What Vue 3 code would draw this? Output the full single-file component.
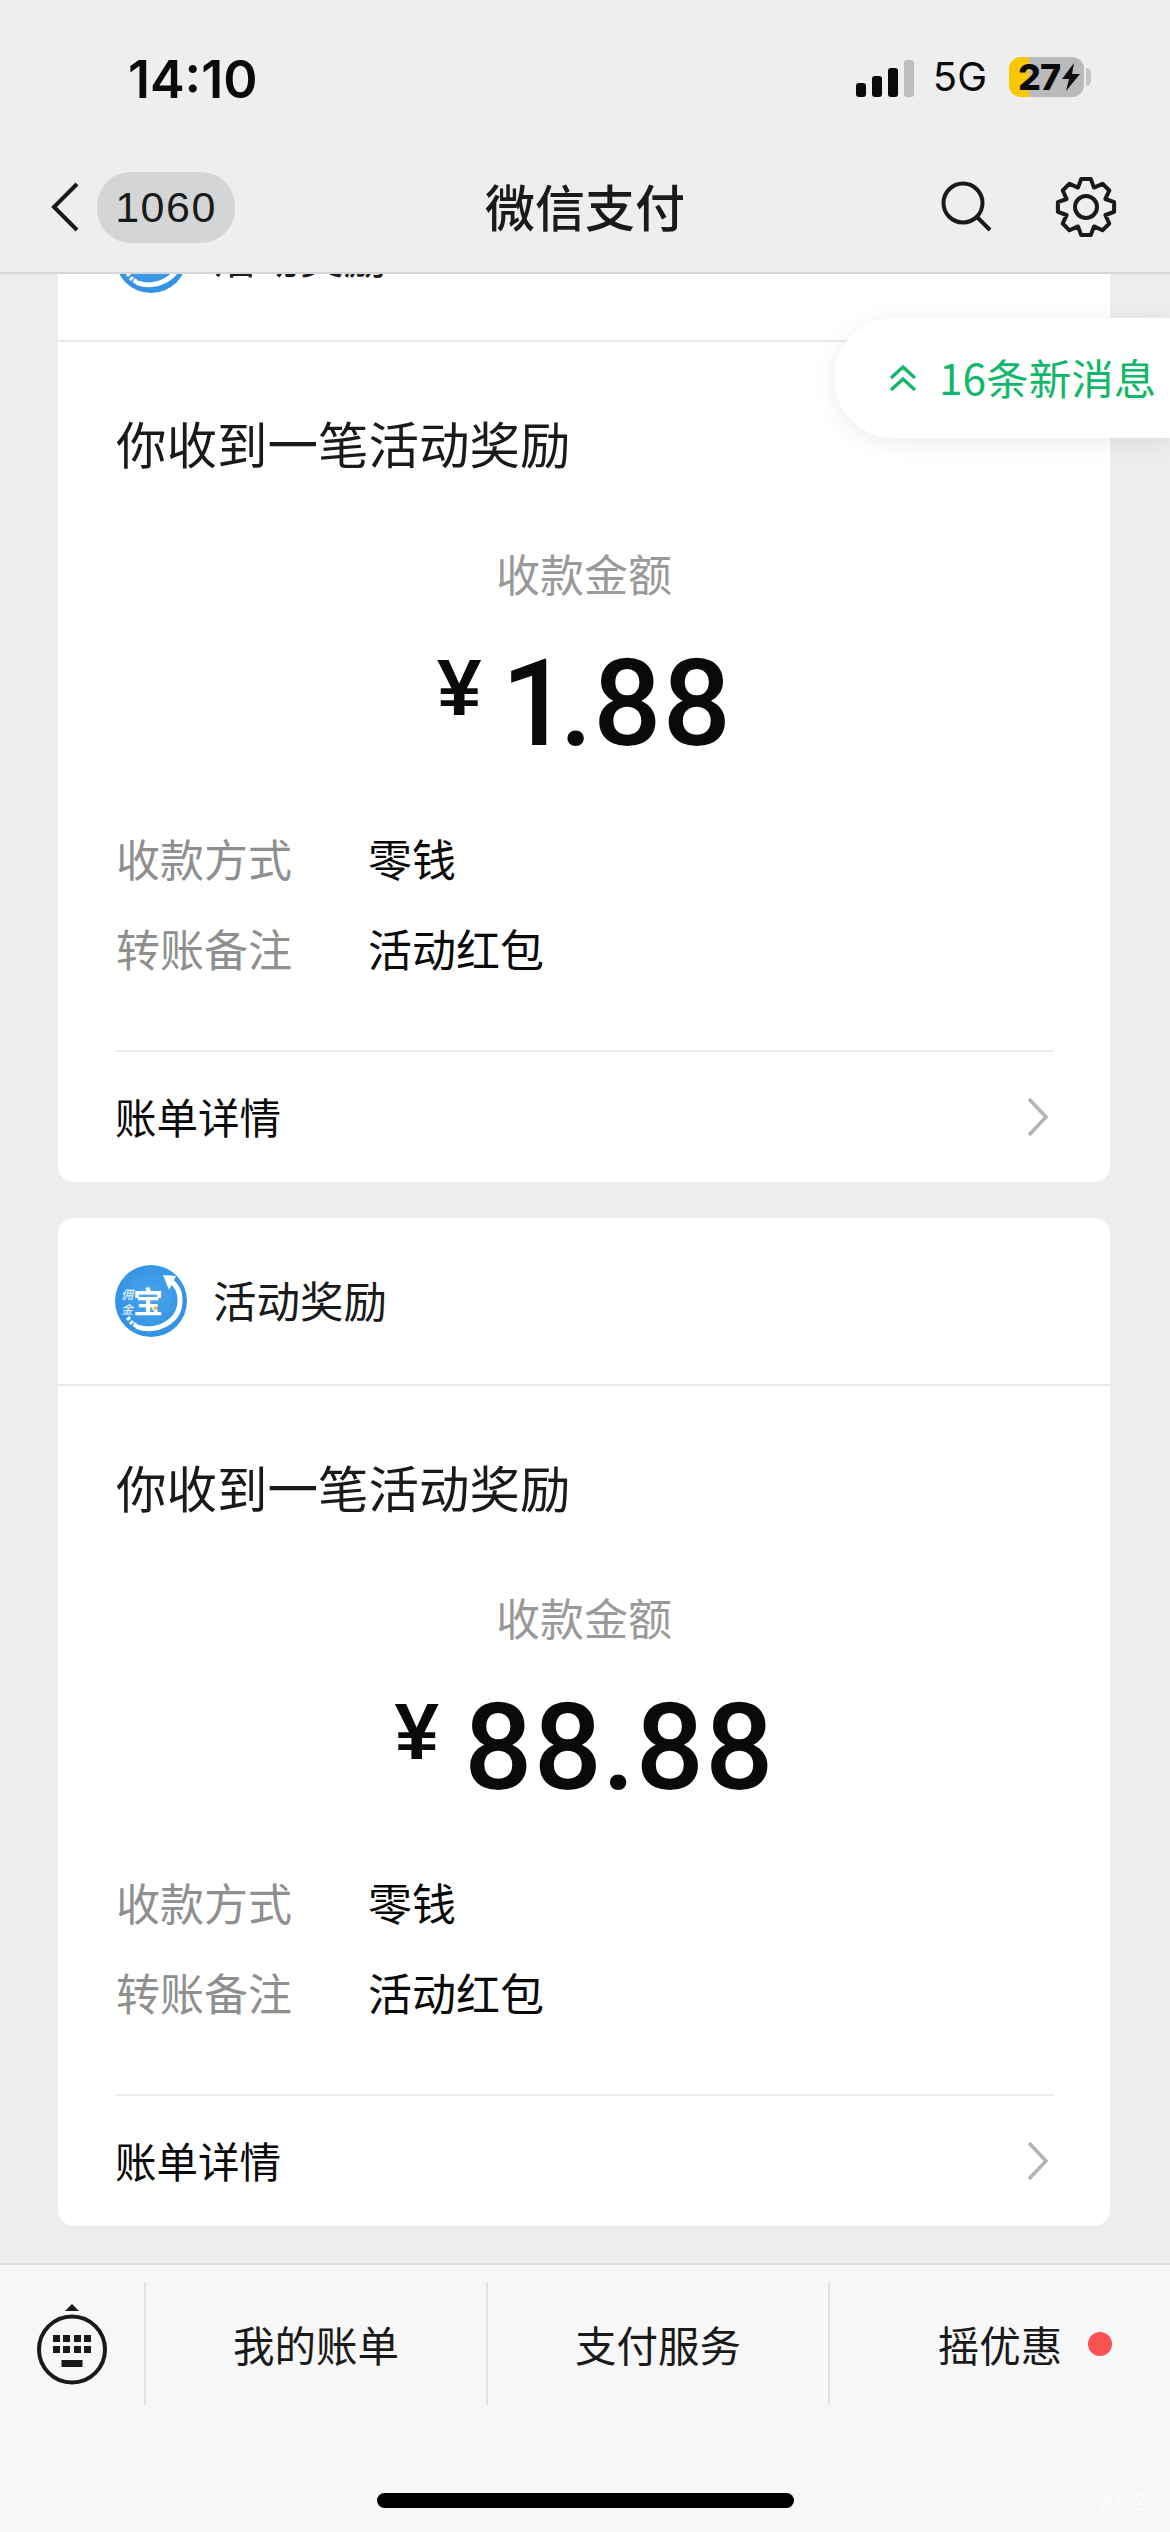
<template>
  <div class="page">
    <header class="top">
      <div class="status">
        <span class="time">14:10</span>
        <div class="status-right">
          <div class="signal">
            <i class="bar b1"></i>
            <i class="bar b2"></i>
            <i class="bar b3"></i>
            <i class="bar b4 off"></i>
          </div>
          <span class="net">5G</span>
          <div class="battery">
            <span class="level">27</span>
            <svg class="bolt" width="20" height="28" viewBox="0 0 20 28">
              <path d="M13 0 1 16h7L5 28 19 11h-8z" fill="#111" />
            </svg>
          </div>
          <i class="nub"></i>
        </div>
      </div>
      <div class="nav">
        <div class="nav-left">
          <svg class="back" width="30" height="50" viewBox="0 0 30 50">
            <path d="M27 2 4 25l23 23" fill="none" stroke="#1a1a1a" stroke-width="4" />
          </svg>
          <span class="unread">1060</span>
        </div>
        <span class="nav-title">微信支付</span>
        <div class="nav-right">
          <svg width="52" height="52" viewBox="0 0 52 52">
            <circle cx="22" cy="22" r="19.5" fill="none" stroke="#1a1a1a" stroke-width="4" />
            <path d="M36 36l13 13" stroke="#1a1a1a" stroke-width="4" />
          </svg>
          <svg width="62" height="62" viewBox="0 0 62 62">
            <path :d="gearPath" fill="none" stroke="#1a1a1a" stroke-width="4" stroke-linejoin="round" />
            <circle cx="31" cy="31" r="11" fill="none" stroke="#1a1a1a" stroke-width="4" />
          </svg>
        </div>
      </div>
    </header>

    <main class="feed">
      <section class="card" v-for="item in messages" :key="item.amount">
        <div class="card-head">
          <svg class="logo" width="72" height="72" viewBox="0 0 72 72">
            <defs>
              <radialGradient id="logoBlue" cx="50%" cy="45%" r="60%">
                <stop offset="0%" stop-color="#4aa6ee" />
                <stop offset="100%" stop-color="#2f8fe2" />
              </radialGradient>
            </defs>
            <circle cx="36" cy="36" r="36" fill="url(#logoBlue)" />
            <path d="M23 62C40 68 66 58 65 34 65 26 61 20 56 16" fill="none" stroke="#fff" stroke-width="5" stroke-linecap="round" />
            <path d="M48 10 61 11 54 25z" fill="#fff" />
            <path d="M12 55l3-3M15 59l3-3M19 62l2-4" stroke="#fff" stroke-width="3" />
            <text x="6" y="34" class="logo-small">佣</text>
            <text x="6" y="49" class="logo-small">金</text>
            <text x="18" y="48" class="logo-big">宝</text>
            <rect x="38.5" y="41.5" width="3.5" height="3.5" fill="#f2c14a" />
          </svg>
          <span class="card-name">{{ item.from }}</span>
        </div>
        <div class="card-body">
          <h2 class="card-title">{{ item.title }}</h2>
          <div class="amount-label">收款金额</div>
          <div class="amount">
            <span class="yen">¥</span>
            <span class="digits">{{ item.amount }}</span>
          </div>
          <div class="row" v-for="row in item.rows" :key="row.label">
            <span class="row-label">{{ row.label }}</span>
            <span class="row-value">{{ row.value }}</span>
          </div>
        </div>
        <div class="card-foot">
          <span class="foot-text">账单详情</span>
          <svg width="24" height="40" viewBox="0 0 24 40">
            <path d="M3 2l17 18L3 38" fill="none" stroke="#b4b4b4" stroke-width="3.6" />
          </svg>
        </div>
      </section>
      <div class="new-pill">
        <svg width="30" height="26" viewBox="0 0 30 26">
          <path d="M3 13 15 2l12 11M3 25l12-11 12 11" fill="none" stroke="#12b76a" stroke-width="3.4" />
        </svg>
        <span class="pill-text">16条新消息</span>
      </div>
    </main>

    <footer class="menu">
      <div class="menu-row">
        <div class="kb">
          <svg width="72" height="82" viewBox="0 0 72 82">
            <path d="M36 0l7 7H29z" fill="#1a1a1a" />
            <circle cx="36" cy="45.5" r="33" fill="none" stroke="#1a1a1a" stroke-width="4" />
            <g fill="#1a1a1a">
              <rect v-for="key in keys" :key="key.x + '-' + key.y" :x="key.x" :y="key.y" width="7" height="7" />
              <rect x="25.5" y="56" width="21" height="7" />
            </g>
          </svg>
        </div>
        <div class="menu-item" v-for="entry in menu" :key="entry.text">
          <span class="menu-text">
            {{ entry.text }}
            <i v-if="entry.dot" class="dot"></i>
          </span>
        </div>
      </div>
      <div class="home-bar"></div>
      <span class="mark">卡农社区</span>
    </footer>
  </div>
</template>

<script setup>
const rows = [
  { label: '收款方式', value: '零钱' },
  { label: '转账备注', value: '活动红包' }
]

const messages = [
  { from: '活动奖励', title: '你收到一笔活动奖励', amount: '1.88', rows },
  { from: '活动奖励', title: '你收到一笔活动奖励', amount: '88.88', rows }
]

const menu = [
  { text: '我的账单' },
  { text: '支付服务' },
  { text: '摇优惠', dot: true }
]

// 键盘图标上的两排小方块
const keys = []
for (const y of [31, 42]) {
  for (const x of [17, 27, 38, 48]) {
    keys.push({ x, y })
  }
}

// 8 齿的设置图标
const buildGear = () => {
  const cx = 31
  const cy = 31
  const points = []
  for (let i = 0; i < 8; i++) {
    const base = (i * Math.PI) / 4 - Math.PI / 2
    const steps = [
      [21, -0.39],
      [28.5, -0.17],
      [28.5, 0.17],
      [21, 0.39]
    ]
    for (const [r, offset] of steps) {
      const a = base + offset
      points.push((cx + r * Math.cos(a)).toFixed(1) + ' ' + (cy + r * Math.sin(a)).toFixed(1))
    }
  }
  return 'M' + points.join('L') + 'Z'
}

const gearPath = buildGear()
</script>

<style>
html, body { margin: 0; padding: 0; background: #ededed; }
</style>

<style scoped>
.page { width: 1170px; height: 2532px; display: flex; flex-direction: column; overflow: hidden; background: #ededed; color: #1a1a1a; font-family: "Noto Sans CJK SC", "Liberation Sans", sans-serif; }

.top { height: 274px; box-sizing: border-box; background: #eeeeef; border-bottom: 2px solid #d6d6d6; position: relative; z-index: 2; flex: none; }
.status { height: 157px; display: flex; justify-content: space-between; align-items: flex-start; padding: 0 79px 0 128px; box-sizing: border-box; }
.time { font-family: Inter, sans-serif; font-size: 52px; font-weight: 600; line-height: 50px; margin-top: 55px; color: #0a0a0a; }
.status-right { display: flex; align-items: center; margin-top: 57px; height: 40px; }
.signal { display: flex; align-items: flex-end; gap: 6px; height: 37px; margin-top: 2px; }
.bar { width: 10px; border-radius: 3px; background: #0a0a0a; display: block; }
.b1 { height: 14px; }
.b2 { height: 21px; }
.b3 { height: 29px; }
.b4 { height: 37px; }
.bar.off { background: #bfbfbf; }
.net { font-family: Inter, sans-serif; font-size: 40px; line-height: 40px; margin-left: 19px; color: #0a0a0a; }
.battery { width: 75px; height: 40px; margin-left: 22px; border-radius: 12px; background: linear-gradient(90deg, #f9c802 0, #f9c802 20px, #bababa 20px); display: flex; align-items: center; padding-left: 9px; box-sizing: border-box; }
.level { font-family: Inter, sans-serif; font-size: 36px; font-weight: 800; line-height: 40px; color: #0a0a0a; letter-spacing: -1px; }
.bolt { margin-left: 1px; }
.nub { width: 5px; height: 18px; margin-left: 2px; background: #c4c4c4; border-radius: 0 5px 5px 0; display: block; }

.nav { height: 100px; display: flex; align-items: center; justify-content: space-between; padding: 0 53px 0 50px; position: relative; }
.nav-left { display: flex; align-items: center; gap: 17px; }
.unread { width: 138px; height: 71px; border-radius: 34px; background: #d3d5d6; font-family: "Liberation Sans", sans-serif; font-size: 43px; letter-spacing: 1.5px; display: flex; align-items: center; justify-content: center; }
.nav-title { position: absolute; left: 0; right: 0; top: 18px; text-align: center; font-size: 50px; font-weight: 500; line-height: 60px; pointer-events: none; }
.nav-right { display: flex; align-items: center; gap: 62px; }

.feed { flex: 1; margin-top: -100px; padding: 0 60px 0 58px; display: flex; flex-direction: column; gap: 36px; position: relative; min-height: 0; }
.card { background: #fff; border-radius: 16px; flex: none; }
.card-head { height: 168px; box-sizing: border-box; padding-left: 57px; display: flex; align-items: center; gap: 26px; border-bottom: 2px solid #e8e8e8; }
.card-name { font-size: 43.5px; line-height: 60px; margin-top: -2px; }
.logo-small { font-size: 12px; fill: #fff; font-style: italic; }
.logo-big { font-size: 30px; font-weight: 700; fill: #fff; }
.card-body { padding: 60px 58px 0; }
.card-title { margin: 0; font-size: 50.5px; font-weight: 400; line-height: 80px; }
.amount-label { margin-top: 61px; font-size: 44px; line-height: 60px; color: #999; text-align: center; }
.amount { margin-top: 36px; height: 130px; display: flex; justify-content: center; gap: 24px; }
.yen { font-family: "Liberation Sans", sans-serif; font-size: 80px; font-weight: 700; line-height: 80px; margin-top: 9px; color: #0a0a0a; }
.digits { font-family: Roboto, sans-serif; font-weight: 500; font-size: 120px; line-height: 130px; color: #0a0a0a; letter-spacing: -1px; font-variant-numeric: proportional-nums; }
.row { height: 90px; display: flex; align-items: center; font-size: 44px; }
.amount + .row { margin-top: 44px; }
.row-label { width: 252px; color: #8f8f8f; }
.row-value { color: #0a0a0a; }
.card-foot { margin: 57px 56px 0 57px; height: 132px; box-sizing: border-box; border-top: 2px solid #ececec; display: flex; align-items: center; justify-content: space-between; padding-right: 4px; font-size: 41.5px; color: #0a0a0a; }
.foot-text { margin-top: -3px; }

.new-pill { position: absolute; right: 0; top: 144px; width: 336px; height: 120px; box-sizing: border-box; padding-left: 54px; background: #fff; border-radius: 60px 0 0 60px; box-shadow: 0 4px 24px rgba(0, 0, 0, 0.08); display: flex; align-items: center; gap: 21px; color: #12b76a; font-size: 42.5px; white-space: nowrap; }
.pill-text { margin-top: -3px; }

.menu { height: 269px; flex: none; background: #f7f7f7; border-top: 2px solid #dedede; box-sizing: border-box; position: relative; z-index: 1; }
.menu-row { height: 123px; margin-top: 17px; display: flex; }
.kb { width: 144px; display: flex; justify-content: center; align-items: flex-start; padding-top: 22px; box-sizing: border-box; }
.menu-item { flex: 1; border-left: 2px solid #e2e2e2; display: flex; align-items: center; justify-content: center; font-size: 41.5px; color: #1a1a1a; }
.menu-text { position: relative; line-height: 60px; }
.dot { position: absolute; left: calc(100% + 26px); top: 18px; width: 24px; height: 24px; border-radius: 50%; background: #fa5151; }
.home-bar { width: 417px; height: 15px; margin: 88px auto 0; background: #000; border-radius: 8px; }
.mark { position: absolute; right: 22px; bottom: 20px; font-size: 17px; line-height: 20px; color: #fff; opacity: 0.8; }
</style>
